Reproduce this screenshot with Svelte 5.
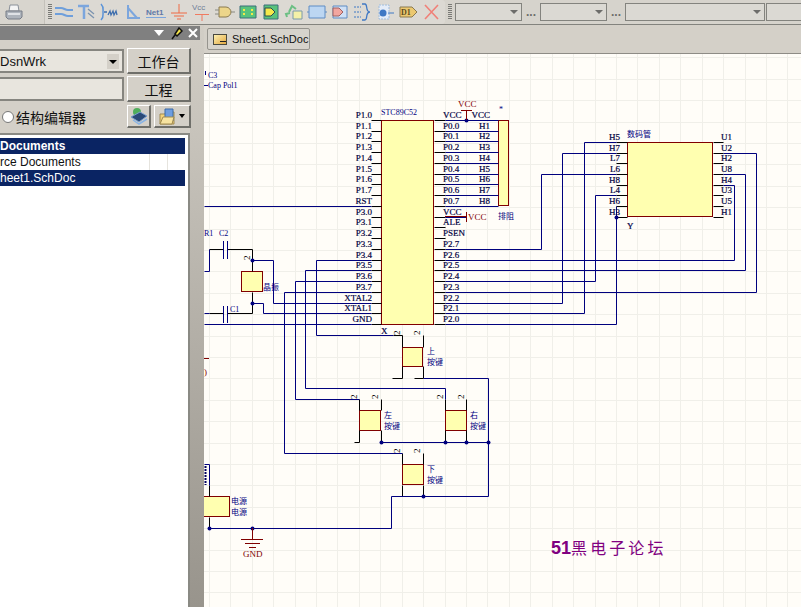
<script>
  const s = (v) => Math.floor(v) + 0.5;
  const r = (i) => s(120.5 + 10.74 * i);
  const u = (i) => s(142.5 + 10.65 * i);
  const pts = (a) => a.map(([x, y]) => `${s(x)},${s(y)}`).join(' ');

  const gridX = Array.from({ length: 28 }, (_, i) => s(209.3 + 21.43 * i));
  const gridY = Array.from({ length: 26 }, (_, i) => s(57.9 + 21.4 * i));

  const leftPins = ['P1.0','P1.1','P1.2','P1.3','P1.4','P1.5','P1.6','P1.7','RST','P3.0','P3.1','P3.2','P3.3','P3.4','P3.5','P3.6','P3.7','XTAL2','XTAL1','GND'];
  const rightPins = ['VCC','P0.0','P0.1','P0.2','P0.3','P0.4','P0.5','P0.6','P0.7','VCC','ALE','PSEN','P2.7','P2.6','P2.5','P2.4','P2.3','P2.2','P2.1','P2.0'];
  const headPins = ['VCC','H1','H2','H3','H4','H5','H6','H7','H8'];
  const segLeft = ['H5','H7','L7','L6','H8','L4','H6','H3'];
  const segRight = ['U1','U2','H2','U8','H4','U3','U5','H1'];

  const wires = [
    [[204, r(8)], [371, r(8)]],
    [[445, r(0)], [498, r(0)]],
    ...[1,2,3,4,5,6,7,8].map((i) => [[445, r(i)], [498, r(i)]]),
    [[445, r(9)], [466, r(9)]],
    [[445, r(12)], [541, r(12)], [541, u(3)], [616, u(3)]],
    [[445, r(13)], [734, r(13)], [734, u(4)], [723, u(4)]],
    [[445, r(14)], [745, r(14)], [745, u(3)], [723, u(3)]],
    [[445, r(15)], [595, r(15)], [595, u(5)], [616, u(5)]],
    [[445, r(16)], [756, r(16)], [756, u(1)], [723, u(1)]],
    [[445, r(17)], [562, r(17)], [562, u(1)], [616, u(1)]],
    [[445, r(18)], [584, r(18)], [584, u(0)], [616, u(0)]],
    [[445, r(19)], [616, r(19)], [616, u(6)]],
    [[393, 335], [316, 335], [316, r(13)], [371, r(13)]],
    [[445, 399], [445, 388], [305, 388], [305, r(14)], [371, r(14)]],
    [[359, 399], [295, 399], [295, r(15)], [371, r(15)]],
    [[402, 453], [284, 453], [284, r(16)], [371, r(16)]],
    [[252, 260], [273, 260], [273, r(17)], [371, r(17)]],
    [[252, 303], [263, 303], [263, r(18)], [371, r(18)]],
    [[204, r(19)], [371, r(19)]],
    [[204, 271], [209, 271], [209, 249]],
    [[204, 313], [209, 313]],
    [[423, 378], [488, 378], [488, 496], [391, 496], [391, 528], [209, 528]],
    [[381, 442], [488, 442]],
    [[204, 464], [209, 464], [209, 485]],
  ];

  const stubs = [
    ...leftPins.map((_, i) => [[371, r(i)], [381, r(i)]]),
    ...rightPins.map((_, i) => [[434, r(i)], [445, r(i)]]),
    ...segLeft.map((_, i) => [[616, u(i)], [627, u(i)]]),
    ...segRight.map((_, i) => [[713, u(i)], [723, u(i)]]),
    [[209, 249], [223, 249]],
    [[227, 249], [252, 249], [252, 271]],
    [[209, 313], [223, 313]],
    [[227, 313], [252, 313], [252, 292]],
    [[393, 335], [402, 335], [402, 347]], [[423, 335], [423, 347]],
    [[392, 378], [402, 378], [402, 366]], [[414, 378], [423, 378], [423, 366]],
    [[359, 399], [359, 410]], [[381, 399], [381, 410]],
    [[354, 442], [359, 442], [359, 430]], [[381, 442], [381, 430]],
    [[445, 399], [445, 410]], [[466, 399], [466, 410]],
    [[445, 430], [445, 442]], [[466, 430], [466, 442]],
    [[402, 453], [402, 464]], [[423, 453], [423, 464]],
    [[402, 485], [402, 496]], [[423, 485], [423, 496]],
    [[209, 485], [209, 496]], [[209, 517], [209, 528]],
  ];

  const dots = [[466, r(0)], [616, u(7)], [252, 260], [252, 303], [381, 442], [445, 442], [466, 442], [488, 442], [423, 496], [252, 528], [209, 528]];

  const bodies = [
    [381, 120, 52, 204], [498, 120, 10, 85], [627, 142, 85, 74], [241, 271, 21, 20],
    [402, 347, 20, 19], [359, 410, 21, 20], [445, 410, 21, 20], [402, 464, 21, 20], [195, 496, 34, 20],
  ];

  const keys = [
    { x: 427, y: 354, t: '上' }, { x: 384, y: 418, t: '左' },
    { x: 470, y: 418, t: '右' }, { x: 427, y: 472, t: '下' },
  ];
  const pinNums = [
    [400, 335], [420, 335], [357, 399], [378, 399], [443, 399], [464, 399], [400, 453], [420, 453], [250, 260],
  ];

  const tools = ['wire','bus','entry','line','net','gnd','vcc','gate','sheet','port','reuse','box','tag','brace','dot'];
</script>

<div class="app">
  <header class="toolbar">
    <div class="seg seg-print">
      <svg class="print" viewBox="0 0 18 16" width="18" height="16">
        <path d="M5 1h8l1 6H4z" fill="#f4f4f4" stroke="#8a9099"/>
        <path d="M1 7h16v6l-2 2H3l-2-2z" fill="#aeb4bc" stroke="#767c86"/>
        <path d="M3 9h12v2H3z" fill="#dfe2e6"/>
      </svg>
    </div>
    <div class="seg seg-tools">
      <span class="grip"></span>
      <div class="tools">
        {#each tools as t}
          <span class="tool">
            {#if t === 'wire'}
              <svg viewBox="0 0 20 16"><path d="M1 4h6c3 0 4 2 7 2h5M1 10h6c3 0 4 2 7 2h5" fill="none" stroke="#6f9fdb" stroke-width="2.200"/></svg>
            {:else if t === 'bus'}
              <svg viewBox="0 0 20 16"><path d="M1 2h11M7 2v13" fill="none" stroke="#7ca6dd" stroke-width="2.500"/><path d="M11 5l6 5M11 9l6 5" fill="none" stroke="#7c94b0" stroke-width="1.300"/></svg>
            {:else if t === 'entry'}
              <svg viewBox="0 0 20 16"><path d="M1 0c3 3 2 5 2 8s1 5-2 8" fill="none" stroke="#5b93d8" stroke-width="1.500"/><path d="M4 8h3M8 11l2-4 1 4 2-4 1 4 2-4 1 4" fill="none" stroke="#3f6fae" stroke-width="1.300"/></svg>
            {:else if t === 'line'}
              <svg viewBox="0 0 20 16"><path d="M5 1v13h12M5 4l9 10" fill="none" stroke="#7ca6dd" stroke-width="2"/></svg>
            {:else if t === 'net'}
              <svg viewBox="0 0 20 16"><text x="0" y="11" class="net">Net1</text><path d="M0 13.500h20" stroke="#7ca6dd"/></svg>
            {:else if t === 'gnd'}
              <svg viewBox="0 0 20 16"><path d="M10 0v9M2 9h16M5 12h10M8 15h4" fill="none" stroke="#ef6a45"/></svg>
            {:else if t === 'vcc'}
              <svg viewBox="0 0 20 18"><text x="0" y="7" class="vcc">Vcc</text><path d="M3 11.500h14M10 11v7" fill="none" stroke="#ef7a60"/></svg>
            {:else if t === 'gate'}
              <svg viewBox="0 0 20 16"><path d="M4 3h7c3 0 5 3 5 5s-2 5-5 5H4z" fill="#ecd58a" stroke="#8a7a50"/><path d="M0 6h4M0 10h4M16 8h4" stroke="#8a8a80"/></svg>
            {:else if t === 'sheet'}
              <svg viewBox="0 0 20 16"><path d="M2 2h16v12H2z" fill="#58c37c" stroke="#3b6f7a"/><path d="M5 5h2v2H5zM5 9h2v2H5zM13 5h2v2h-2zM13 9h2v2h-2z" fill="#f4e94a"/></svg>
            {:else if t === 'port'}
              <svg viewBox="0 0 20 16"><path d="M3 1h14v14H3z" fill="#58c37c" stroke="#3b6f7a"/><path d="M4 4h6l4 4-4 4H4z" fill="#f4e94a" stroke="#2c4a50"/></svg>
            {:else if t === 'reuse'}
              <svg viewBox="0 0 20 16"><path d="M5 8l3-6 4 3M3 13l-1-3 4-1" fill="none" stroke="#6cbf84" stroke-width="2"/><path d="M9 7h9v8H9z" fill="#f4f0a8" stroke="#7a9aaa"/></svg>
            {:else if t === 'box'}
              <svg viewBox="0 0 20 16"><path d="M2 2h16v12H2z" fill="#bcd6f2" stroke="#5e8cc4"/><path d="M0 8h2M18 8h2" stroke="#5e8cc4"/></svg>
            {:else if t === 'tag'}
              <svg viewBox="0 0 20 16"><path d="M3 2h14v12H3z" fill="#cfe0f5" stroke="#5e8cc4"/><path d="M3 4h6l4 4-4 4H3z" fill="#f2a6a0" stroke="#a06060"/></svg>
            {:else if t === 'brace'}
              <svg viewBox="0 0 20 16"><path d="M1 3h7M1 8h7M1 13h7" stroke="#3f78c4" stroke-dasharray="2 1"/><path d="M9 0h3c3 0 0 8 5 8-5 0-2 8-5 8H9" fill="none" stroke="#3f78c4" stroke-width="1.300"/></svg>
            {:else}
              <svg viewBox="0 0 20 16"><path d="M3 1h10v14H3z" fill="#e4ecf8" stroke="#a0bcdc" stroke-dasharray="2 1"/><circle cx="7" cy="9" r="3.500" fill="#3f78c4"/><path d="M12 9h6" stroke="#3f78c4"/></svg>
            {/if}
          </span>
        {/each}
        <span class="tool">
          <svg viewBox="0 0 20 16"><path d="M1 3h12l5 5-5 5H1z" fill="#ecc870" stroke="#8a7a50"/><text x="2" y="11" class="d1">D1</text></svg>
        </span>
        <span class="tool">
          <svg viewBox="0 0 20 16"><path d="M3 1l13 14M16 1L3 15" stroke="#f08078" stroke-width="1.600"/></svg>
        </span>
      </div>
    </div>
    <div class="seg seg-combos">
      <span class="grip"></span>
      <span class="combo c1"><i></i></span><span class="dots">...</span>
      <span class="combo c1"><i></i></span><span class="dots">...</span>
      <span class="combo c2"><i></i></span>
      <span class="combo c3"><i></i></span>
    </div>
  </header>

  <div class="body">
    <aside class="panel">
      <div class="title">
        <span class="tri"></span>
        <svg width="12" height="13" viewBox="0 0 12 13"><path d="M4 7l4-6 3 3-5 5zM1 12l3-4" fill="#f2e24a" stroke="#111" stroke-width="1.500"/></svg>
        <svg width="10" height="10" viewBox="0 0 10 10"><path d="M1 1l8 8M9 1l-8 8" stroke="#fff" stroke-width="2"/></svg>
      </div>
      <div class="row">
        <div class="field"><span>DsnWrk</span><span class="drop"></span></div>
        <button class="btn">工作台</button>
      </div>
      <div class="row">
        <div class="field"></div>
        <button class="btn">工程</button>
      </div>
      <div class="row row3">
        <label class="radio"><span class="dot"></span>结构编辑器</label>
        <button class="btn small">
          <svg width="18" height="18" viewBox="0 0 18 18"><circle cx="7" cy="5" r="4" fill="#4fae5c"/><path d="M1 10l9-5 7 4-8 6z" fill="#2a4a78" stroke="#7aa0d0"/><path d="M3 13l6 4 8-5" fill="none" stroke="#8ab4e4" stroke-width="1.500"/></svg>
        </button>
        <button class="btn small wide">
          <svg width="17" height="17" viewBox="0 0 17 17"><path d="M1 6h5l1-2h8v12H1z" fill="#f2d27a" stroke="#a08a50"/><path d="M6 1h8v12H6z" fill="#6d9de0" stroke="#3a6aa8"/><path d="M1 16l3-7h11l-2 7z" fill="#f7e3a0" stroke="#a08a50"/></svg>
          <span class="caret"></span>
        </button>
      </div>
      <div class="list">
        <div class="li head">Documents</div>
        <div class="li plain">rce Documents<i class="cell c-a"></i><i class="cell c-b"></i></div>
        <div class="li sel">heet1.SchDoc</div>
      </div>
    </aside>

    <main class="doc">
      <div class="tabs">
        <div class="tab">
          <svg width="14" height="11" viewBox="0 0 14 11"><defs><linearGradient id="tb" x1="0" y1="0" x2="1" y2="1"><stop offset="0" stop-color="#fff4b8"/><stop offset="1" stop-color="#e2a63c"/></linearGradient></defs><rect x=".5" y=".5" width="13" height="10" fill="url(#tb)" stroke="#4a4a40"/><path d="M7 7.500h6" stroke="#222"/></svg>
          <span>Sheet1.SchDoc</span>
        </div>
      </div>
      <svg class="sheet" width="597" height="553" viewBox="204 54 597 553">
        <rect x="204" y="54" width="597" height="553" fill="#fffdf8"/>
        {#each gridX as x}<line x1={x} x2={x} y1="54" y2="607" class="grid"/>{/each}
        {#each gridY as y}<line x1="204" x2="801" y1={y} y2={y} class="grid"/>{/each}

        {#each bodies as [x, y, w, h]}
          <rect x={x + .5} y={y + .5} width={w} height={h} class="body-rect"/>
        {/each}

        {#each stubs as p}<polyline points={pts(p)} class="stub"/>{/each}
        {#each wires as p}<polyline points={pts(p)} class="wire"/>{/each}
        {#each dots as [x, y]}<circle cx={s(x)} cy={s(y)} r="2" class="node"/>{/each}

        <path d="M223.500 241v18M227.500 241v18M223.500 306v17M227.500 306v17" class="plate"/>
        <path d="M205.500 71v4M204 85.500h4" class="plate"/>
        <path d="M205.500 466v19" class="pinmarks"/>
        <path d="M466.500 110v10M461 110.500h11M466.500 212v10M445 216.500h21M204 358.500h5" class="red"/>
        <path d="M252.500 528v11M241 539.500h22M245 543.500h15M249 547.500h7" class="red"/>

        {#each leftPins as t, i}<text x="372" y={r(i) - 3} class="lbl end">{t}</text>{/each}
        {#each rightPins as t, i}<text x="443" y={r(i) - 3} class="lbl">{t}</text>{/each}
        {#each headPins as t, i}<text x="490" y={r(i) - 3} class="lbl end">{t}</text>{/each}
        {#each segLeft as t, i}<text x="620" y={u(i) - 3} class="lbl end">{t}</text>{/each}
        {#each segRight as t, i}<text x="721" y={u(i) - 3} class="lbl">{t}</text>{/each}

        <text x="381" y="115" class="cmp">STC89C52</text>
        <text x="627" y="137" class="cjk">数码管</text>
        <text x="498" y="219" class="cjk">排阻</text>
        <text x="499" y="112" class="cmp">*</text>
        <text x="458" y="107" class="pwr">VCC</text>
        <text x="468" y="220" class="pwr">VCC</text>
        <text x="243" y="557" class="pwr">GND</text>
        <text x="208" y="78" class="cmp">C3</text>
        <text x="208" y="88" class="cmp">Cap Pol1</text>
        <text x="204" y="236" class="cmp">R1</text>
        <text x="219" y="236" class="cmp">C2</text>
        <text x="230" y="312" class="cmp">C1</text>
        <text x="204" y="375" class="pwr">)</text>
        <text x="381" y="334" class="lbl">X</text>
        <text x="627" y="229" class="lbl">Y</text>
        <text x="263" y="290" class="cjk">晶振</text>
        <text x="231" y="504" class="cjk">电源</text>
        <text x="231" y="515" class="cjk">电源</text>

        {#each keys as k}
          <text x={k.x} y={k.y} class="cjk">{k.t}</text>
          <text x={k.x} y={k.y + 11} class="cjk">按键</text>
        {/each}
        {#each pinNums as [x, y]}
          <text class="pinno" transform="rotate(-90 {x} {y})" x={x} y={y}>2</text>
        {/each}

        <text x="551" y="554" class="brand"><tspan class="brand-num">51</tspan>黑电子论坛</text>
      </svg>
    </main>
  </div>
</div>

<style>
  :global(body) { margin: 0; background: #d4d0c8; overflow: hidden; }
  .app { width: 801px; height: 607px; overflow: hidden; display: flex; flex-direction: column; font-family: "Liberation Sans", Arial, sans-serif; }

  .toolbar { height: 25px; box-sizing: border-box; flex: none; display: flex; background: #d4d0c8; border-bottom: 1px solid #83837e; }
  .seg { height: 24px; display: flex; align-items: center; box-sizing: border-box; }
  .seg-print { width: 45px; padding-left: 5px; background: #d8d5ce; border-right: 1px solid #c4c1ba; }
  .seg-tools { width: 400px; background: #dcd9d3; border-radius: 0 3px 3px 0; padding-left: 3px; }
  .seg-combos { flex: 1; padding-left: 3px; background: #d6d3cc; overflow: hidden; }
  .grip { width: 4px; height: 16px; flex: none; background: repeating-linear-gradient(#7a7a76 0 1px, transparent 1px 2px); }
  .tools { display: flex; align-items: center; }
  .tool { width: 23px; height: 20px; display: flex; align-items: center; justify-content: center; flex: none; }
  .tool svg { width: 20px; height: 18px; overflow: visible; }
  .net { font: bold 8px "Liberation Sans", sans-serif; fill: #6078a8; }
  .vcc { font: 8px "Liberation Sans", sans-serif; fill: #708098; }
  .d1 { font: bold 8px "Liberation Serif", serif; fill: #5a4a20; }

  .combo { height: 18px; box-sizing: border-box; background: #dbd9d3; border: 1px solid #83837e; position: relative; flex: none; display: block; }
  .combo i { position: absolute; right: 3px; top: 6px; border: 4px solid transparent; border-top: 4px solid #6d6d6a; border-bottom: 0; }
  .seg-combos .grip { margin-right: 3px; }
  .c1 { width: 67px; }
  .c2 { width: 140px; }
  .c3 { width: 60px; margin-left: 1px; }
  .dots { width: 18px; text-align: center; font-size: 12px; font-weight: bold; color: #6d6d6a; line-height: 18px; flex: none; }

  .body { flex: 1; display: flex; min-height: 0; }
  .panel { width: 204px; flex: none; background: linear-gradient(#d4d0c8, #d4d0c8) left top / 190px 100% no-repeat, linear-gradient(#d2cec6, #98948c); display: flex; flex-direction: column; overflow: hidden; }
  .title { height: 14px; margin: 1px 4px 0 0; background: #808080; display: flex; align-items: center; justify-content: flex-end; gap: 5px; padding-right: 2px; flex: none; }
  .tri { width: 0; height: 0; margin-right: 2px; border: 5px solid transparent; border-top: 6px solid #fff; border-bottom: 0; }
  .row { display: flex; width: 191px; gap: 3px; margin-top: 2px; flex: none; height: 26px; }
  .title + .row { margin-top: 8px; }
  .field { flex: 1; margin: 1px 0; box-sizing: border-box; background: #e8e5de; border: 2px solid #86857f; border-left: 0; display: flex; align-items: center; justify-content: space-between; font-size: 13px; color: #111; }
  .drop { width: 12px; height: 15px; margin-right: 3px; background: #d4d0c8; position: relative; }
  .drop::after { content: ""; position: absolute; left: 2px; top: 6px; border: 4px solid transparent; border-top: 4px solid #000; border-bottom: 0; }
  .btn { width: 64px; box-sizing: border-box; padding: 0; background: #d4d0c8; border: 1px solid #fff; border-right: 2px solid #6f6f6a; border-bottom: 2px solid #6f6f6a; font: 14px "Noto Sans CJK SC", sans-serif; color: #111; display: flex; align-items: center; justify-content: center; }
  .row3 { height: 23px; margin-top: 3px; }
  .radio { flex: 1; display: flex; align-items: center; gap: 2px; padding-left: 2px; font: 14px/1 "Noto Sans CJK SC", sans-serif; color: #111; white-space: nowrap; }
  .radio .dot { width: 10px; height: 10px; background: #fff; border: 1px solid #777; border-radius: 50%; flex: none; }
  .small { width: 24px; }
  .wide { width: 37px; gap: 3px; }
  .caret { border: 3px solid transparent; border-top: 4px solid #000; border-bottom: 0; }
  .list { width: 190px; flex: 1; margin-top: 5px; box-sizing: border-box; background: #fff; border: 2px solid #8a8a84; border-left: 0; border-bottom: 0; padding-top: 3px; overflow: hidden; }
  .li { width: 185px; height: 16px; font-size: 12px; line-height: 16px; white-space: nowrap; position: relative; }
  .head { background: #0a2463; color: #fff; font-weight: bold; }
  .plain { color: #111; }
  .sel { background: #0a2463; color: #fff; }
  .cell { position: absolute; top: 0; bottom: 0; width: 1px; background: #e6e4de; }
  .c-a { left: 149px; }
  .c-b { left: 167px; }

  .doc { flex: 1; display: flex; flex-direction: column; min-width: 0; }
  .tabs { height: 29px; flex: none; background: #d4d0c8; border-bottom: 1px solid #8e8c86; box-sizing: border-box; padding: 3px; }
  .tab { width: 103px; height: 22px; box-sizing: border-box; border: 1px solid #96948e; border-radius: 2px; display: flex; align-items: center; gap: 5px; padding-left: 5px; font-size: 11px; color: #111; background: #d6d3cc; white-space: nowrap; }
  .tab svg { flex: none; }
  .sheet { display: block; flex: none; }

  .grid { stroke: #f0efe9; stroke-width: 1; }
  .body-rect { fill: #ffffb0; stroke: #800000; stroke-width: 1; }
  .wire { fill: none; stroke: #00007e; stroke-width: 1; }
  .stub { fill: none; stroke: #000; stroke-width: 1; }
  .node { fill: #00007e; }
  .plate { fill: none; stroke: #00007e; stroke-width: 1; }
  .pinmarks { fill: none; stroke: #000060; stroke-width: 2; stroke-dasharray: 2 1; }
  .red { fill: none; stroke: #800000; stroke-width: 1; }
  .lbl { font: 9px "Liberation Serif", serif; fill: #000040; stroke: #000040; stroke-width: 0.2px; }
  .end { text-anchor: end; }
  .cmp { font: 8px "Liberation Serif", serif; fill: #000080; }
  .pwr { font: 9px "Liberation Serif", serif; fill: #800000; }
  .cjk { font: 8px "Noto Sans CJK SC", sans-serif; fill: #000080; }
  .pinno { font: 9px "Liberation Serif", serif; fill: #000; }
  .brand { font: 16px "Noto Sans CJK SC", sans-serif; fill: #800080; letter-spacing: 3.100px; }
  .brand-num { font: bold 18px "Liberation Sans", sans-serif; letter-spacing: 0; }
</style>
